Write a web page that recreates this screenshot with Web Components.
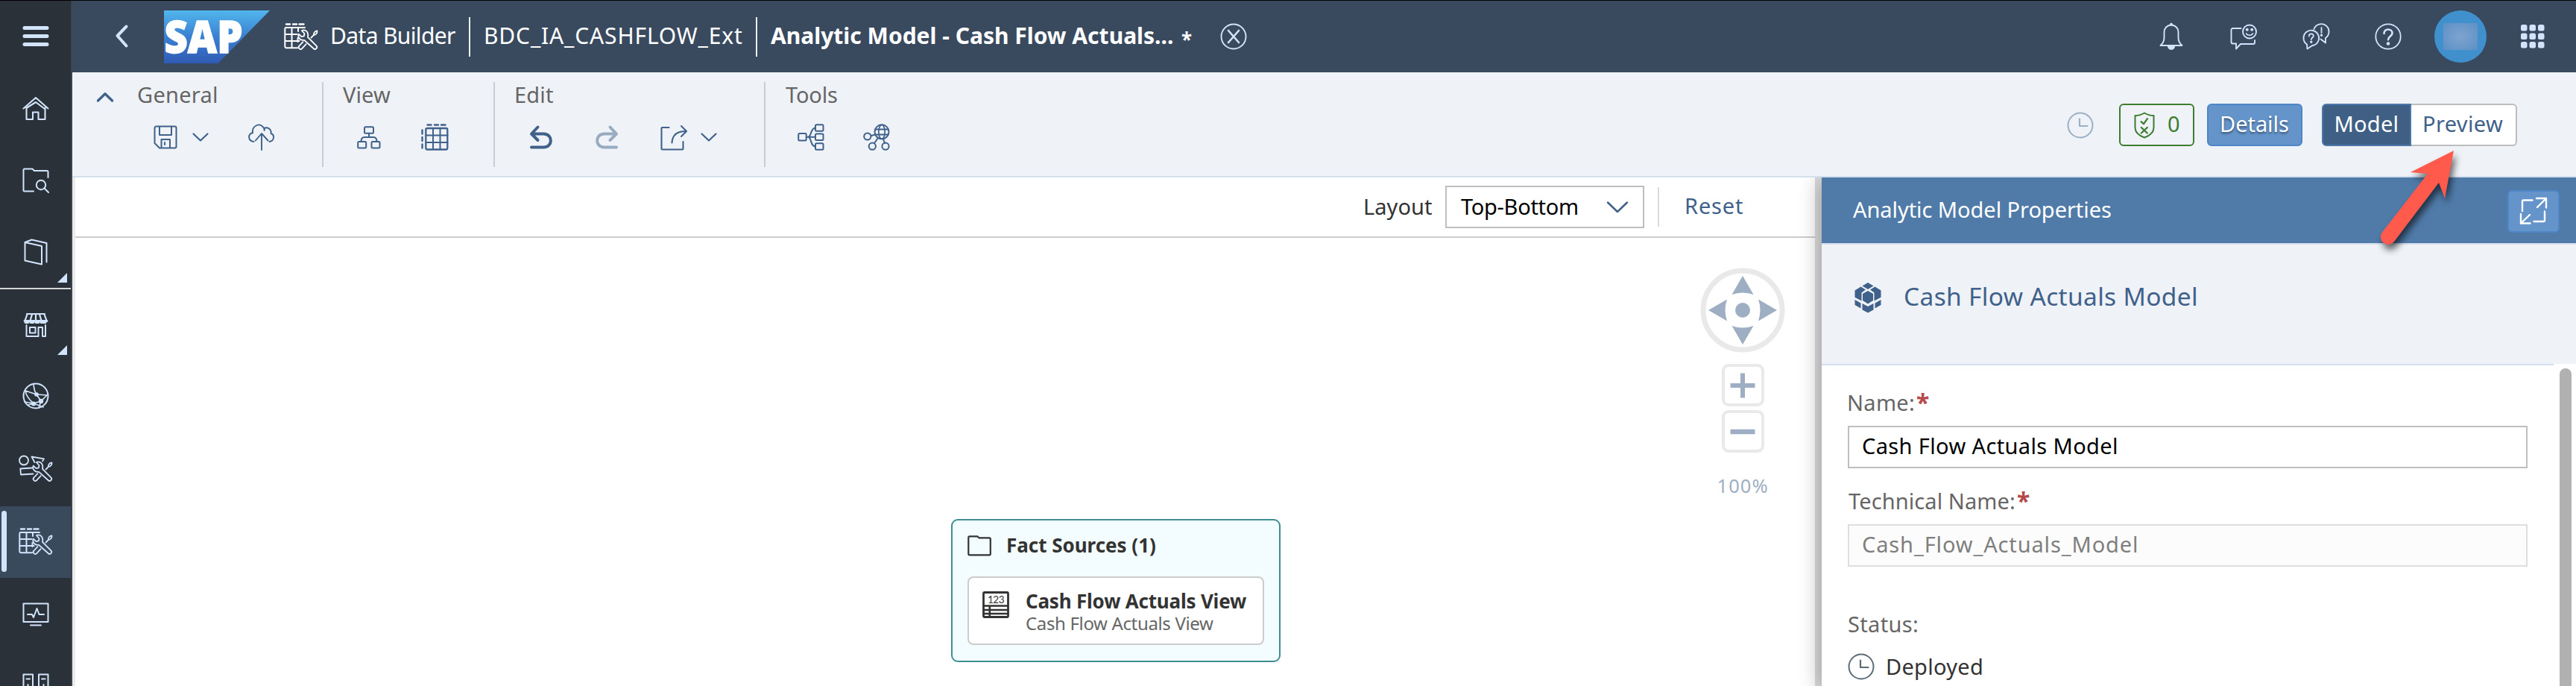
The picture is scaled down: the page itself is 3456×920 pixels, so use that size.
<!DOCTYPE html>
<html lang="en">
<head>
<meta charset="utf-8">
<title>Data Builder</title>
<style>
  html, body { margin: 0; height: 920px; overflow: hidden; background: #fff; }
  body { font-family: "Noto Sans", "Open Sans", sans-serif; font-size: 29px; color: #333; }
</style>
</head>
<body>
<app-shell></app-shell>

<script>
const define = (name, html, setup) => {
  const tpl = document.createElement('template');
  tpl.innerHTML = html;
  customElements.define(name, class extends HTMLElement {
    connectedCallback() {
      if (this.shadowRoot) return;
      this.attachShadow({ mode: 'open' }).append(tpl.content.cloneNode(true));
      if (setup) setup.call(this, this.shadowRoot);
    }
  });
};

/* Icons: [width, height, markup]; strokes use currentColor */
const WRENCH = `
  <path d="M29 10c-1.500-.8-3.500-.8-5.200 0l3.700 4-.6 3.300-3.400.8-3.800-3.500c-1.500 4.200 1.500 9 7.500 8.200L39.600 34a2.600 2.600 0 0 0 3.800-3.700L32 18.800c.8-4-.5-7.300-3-8.800z" stroke-width="1.800"/>
  <path d="M25.500 25.200l-5 5.300a2.500 2.500 0 0 0 3.700 3.700l5.500-6M36.500 19.500l3.500-3.600M40 15.900c-.8-2.300 1.800-5.500 4.500-5.600.4 2.800-2 5.800-4.500 5.600z" stroke-width="1.800"/>`;
const ICONS = {
  menu: [36, 28, `<path d="M3 3.500h30M3 14.500h30M3 25.500h30" stroke-width="5"/>`],
  home: [36, 32, `<path d="M1.500 16.500L18 2l16.500 14.500M5.500 15.500V31h8.500v-9.500h7.500V31h9V15.500M6 15.500L18 8l12 9" stroke-width="2.100"/>`],
  foldersearch: [36, 33, `<path d="M15 31.500H3A1.500 1.500 0 0 1 1.500 30V3A1.500 1.500 0 0 1 3 1.500h10.500l2.500 2.500h17A1.500 1.500 0 0 1 34.500 5.500V13" stroke-width="2"/><circle cx="25" cy="23" r="6.200" stroke-width="2"/><path d="M29.500 27.500l5.500 5.500"/>`],
  book: [32, 36, `<path d="M1.500 5v24.500L24 34.500V10L1.500 5l9-3.500 20 4.500v25.500M24 34.500v-24" stroke-width="2"/>`],
  market: [32, 32, `<path d="M4 1h24M4.500 1.500L1.500 10h29L27.500 1.500M11 1.500L8.500 10M16 1.500V10M21 1.500l2.500 8.500" stroke-width="2.200"/><path d="M1 10.500h30M2 12.500h4M9 12.500h4M16 12.500h4M23 12.500h6" stroke-width="2.800"/><path d="M3.500 16v15h16V19h5.500v12h4V16M8 19h7.500v7.500H8z" stroke-width="2"/>`],
  globenet: [36, 36, `<circle cx="18" cy="18" r="16.500" stroke-width="2"/><path d="M15 2c.5 6 1 10 4 14l6 9M4 11l15 5 15 1M4 11c1 7 5 12 11 17l10-3 9-9M3 26l12 2 13 5M15 28l-7 2M25 25l-3 9" stroke-width="1.700"/><g fill="currentColor" stroke="none"><circle cx="19" cy="16" r="2.800"/><circle cx="25" cy="25" r="3.200"/><circle cx="15" cy="28.500" r="3"/></g>`],
  shapes: [46, 36, `<circle cx="7" cy="7.500" r="6" stroke-width="1.800"/><path d="M21.500 10l-4-7.500 16.500 2.800-2 3.200M19.500 25.500l-16.500 1-.7-8L18.500 17.500" stroke-width="1.800"/><g>${WRENCH}</g>`],
  datatools: [46, 36, `<path d="M3 1.500h5M12 1.500h5M20.500 1.500h6" stroke-width="2.400"/><path d="M28 6H3A1.800 1.800 0 0 0 1.300 7.800V31.500A1.800 1.800 0 0 0 3 33.200h15M10.500 6v27M19 6v5M1.500 15h16M1.500 24h19M18.500 20v5" stroke-width="2"/>${WRENCH}`],
  monitor: [36, 32, `<path d="M1.500 1.500h33v24.500h-33zM11 30.500h14M7 16h6l2 4 4.500-12 3 8H29" stroke-width="2"/>`],
  servers: [36, 36, `<path d="M1.500 1.500h12.500v33H1.500zM22 1.500h12.500v33H22zM5.500 7.500H10M26 7.500h4.500M7.500 15v4M28.500 15v4" stroke-width="2"/>`],
  back: [20, 34, `<path d="M16.500 3.500L4.500 16 16.500 29.500" stroke-width="4"/>`],
  closecircle: [38, 38, `<circle cx="19" cy="19" r="16.500" stroke-width="1.900"/><path d="M12 11l14 16M26 11L12 27" stroke-width="2.600"/>`],
  bell: [32, 36, `<path d="M1.500 30c3.500-3 5-5.500 5-10.500V12a9.500 9.500 0 0 1 19 0v7.500c0 5 1.500 7.500 5 10.500z" stroke-width="1.900"/><path d="M12 31h8a4 4 0 0 1-8 0z" fill="currentColor"/><circle cx="16" cy="1.800" r="1" fill="currentColor"/>`],
  feedback: [36, 36, `<path d="M14.500 7H3.500A2 2 0 0 0 1.500 9v16.500A2 2 0 0 0 3.500 27.500H8V34.500l6-6.500h17a2 2 0 0 0 2-2v-3" stroke-width="1.900"/><circle cx="26" cy="11.500" r="9" stroke-width="1.900"/><path d="M21.500 14c2 3 7 3 9 0" stroke-width="1.600"/><circle cx="22.800" cy="8.800" r="1" fill="currentColor"/><circle cx="29.200" cy="8.800" r="1" fill="currentColor"/>`],
  qa: [37, 36, `<path d="M6 28.500A10.300 10.300 0 1 1 13 30.200L6.500 34.500z" stroke-width="1.900"/><path d="M15.500 8A10.300 10.300 0 1 1 31 20v6.500L24.500 21.500" stroke-width="1.900"/><path d="M8.800 17.500c0-4 6-4 6-.5 0 2.500-3 2.500-3 5M25.500 6v7" stroke-width="1.800"/><circle cx="11.800" cy="25.300" r=".7" fill="currentColor"/><circle cx="25.500" cy="16.200" r=".7" fill="currentColor"/>`],
  help: [36, 36, `<circle cx="18" cy="18" r="16.700" stroke-width="1.800"/><path d="M12.500 14c0-7.500 11-7 11-.5 0 4-5.500 4-5.500 8.800" stroke-width="2.600"/><circle cx="18" cy="27.500" r="1.300" fill="currentColor"/>`],
  grid: [32, 32, `<g fill="currentColor" stroke="none">${[0, 11.5, 23].map(y => [0, 11.5, 23].map(x => `<rect x="${x}" y="${y}" width="8.500" height="8.500" rx="2.500"/>`).join('')).join('')}</g>`],
  up: [24, 15, `<path d="M2.500 12L12 2.800 21.500 12" stroke-width="3.400"/>`],
  save: [32, 32, `<path d="M3.500 1.500h25a2 2 0 0 1 2 2v25a2 2 0 0 1-2 2H8L1.500 24V3.500a2 2 0 0 1 2-2zM8 1.500v11.500h16V1.500M10.500 30V19h11.500v11M15 23v3" stroke-width="2"/>`],
  down: [22, 12, `<path d="M1.500 1.500L11 10.500l9.500-9" stroke-width="2.200"/>`],
  downwide: [30, 16, `<path d="M2 1.500L15 14 28 1.500" stroke-width="2.500"/>`],
  cloudup: [36, 36, `<path d="M7.500 24C-1 23-.5 12.500 6 12.300 4.500 3 15-2 20 4.500 22 6 22 8 21.500 9M21 6.500c4.500-3 10.500.5 9.500 6.500 5.500 2 4.500 10-2 11M18 35V13.500M9.800 22.500L18 13l8.500 9.500" stroke-width="1.900"/>`],
  tree: [32, 31, `<rect x="10" y="1.200" width="12" height="8.600" rx="1.500" stroke-width="2"/><rect x="1.200" y="21" width="11" height="8.500" rx="1.500" stroke-width="2"/><rect x="19.500" y="21" width="11" height="8.500" rx="1.500" stroke-width="2"/><path d="M16 10v5M5.500 21c0-4 1-6 4.500-6h12c3.500 0 4.500 2 4.500 6" stroke-width="2"/>`],
  table: [37, 36, `<path d="M8.500 1.500h5M18 1.500h5M27 1.500h5.500M1.500 8.500v5M1.500 18v5M1.500 27.500v5" stroke-width="2.400"/><rect x="6.300" y="6" width="29" height="28.500" rx="2" stroke-width="2.300"/><path d="M16 6v28M25.500 6v28M6.500 15.500h29M6.500 25h29" stroke-width="2"/>`],
  undo: [32, 32, `<path d="M11.500 2.500L3 11.500l8.500 8.500M3.500 11.500h16c12.500.5 12.500 17.500 0 18H3" stroke-width="4"/>`],
  redo: [32, 32, `<path d="M20.500 2.500L29 11.500l-8.500 8.500M28.500 11.500h-16c-12.500.5-12.500 17.500 0 18H29" stroke-width="4"/>`],
  share: [37, 35, `<path d="M11.500 4H2.500A1 1 0 0 0 1.500 5v27.500a1 1 0 0 0 1 1H29.500a1 1 0 0 0 1-1V23M15.500 24.500C16 14.500 22 9 34 9M28 2l7 7-7 7" stroke-width="2.100"/>`],
  mindmap: [36, 36, `<rect x="1.200" y="13" width="10.500" height="9.500" rx="1.500" stroke-width="2"/><rect x="24" y="1.200" width="10.500" height="8.500" rx="1.500" stroke-width="2"/><rect x="24" y="13.500" width="10.500" height="8.500" rx="1.500" stroke-width="2"/><rect x="24" y="26.200" width="10.500" height="8.500" rx="1.500" stroke-width="2"/><path d="M12 17.800h12M14 17.800c5 0 3-12.300 10-12.300M14 17.800c5 0 3 12.700 10 12.700" stroke-width="2"/>`],
  globelink: [36, 36, `<circle cx="25" cy="10.800" r="9.500" stroke-width="2"/><ellipse cx="25" cy="10.800" rx="4.200" ry="9.500" stroke-width="1.700"/><path d="M16.500 7.500h17M16.500 14.500h17M10.800 16l6-1.800M20 19l-5 7M27 20.500l2 5.500" stroke-width="2"/><circle cx="5.800" cy="17" r="4.600" stroke-width="2"/><circle cx="12.300" cy="30.200" r="4.600" stroke-width="2"/><circle cx="30" cy="30.200" r="4.600" stroke-width="2"/>`],
  clock: [36, 36, `<circle cx="18" cy="18" r="16.500" stroke-width="2"/><path d="M17 9.500V19h10.500" stroke-width="2.200"/>`],
  shield: [28, 36, `<path d="M14 1.500c4 2.500 8 3.500 12.500 3.500v16c0 7-5.500 11-12.500 13.500C7 32 1.500 28 1.500 21V5C6 5 10 4 14 1.500z" stroke-width="2"/><path d="M9.500 13.200l3.500 3 5-7M9.800 21l8 7.500M17.800 21l-8 7.500" stroke-width="2.300"/>`],
  expand: [38, 38, `<path d="M17.500 4.500h-12a1.500 1.500 0 0 0-1.500 1.500v13M34 19.500v12a1.500 1.500 0 0 1-1.500 1.500H19.500M23 2h13v12.500M35 3L24 14M2 23v12.500h12.500M3 34.500L14 24" stroke-width="2.400"/>`],
  cube: [38, 42, `<g fill="currentColor" stroke="none"><path d="M19 1l7.500 4.500L19 10l-7.500-4.500z"/><path d="M9.500 6.500l6.500 4-5.500 4v11L1.500 20.800V11.500z"/><path d="M28.500 6.500l-6.500 4 5.500 4v11l9-4.700V11.500z"/><path d="M19 12l7 4v9l-7 4.500-7-4.500v-9z"/><path d="M1.500 24l8 4.500v7l-8-4.500zM36.500 24l-8 4.500v7l8-4.500z"/><path d="M11.500 29l7.500 4 7.500-4v8.500L19 41.500l-7.500-4z"/></g>`],
  folder: [32, 28, `<path d="M2.800 1.300h10.500l2 2h14a1.500 1.500 0 0 1 1.500 1.500v20a1.500 1.500 0 0 1-1.500 1.500H2.800a1.500 1.500 0 0 1-1.500-1.500V2.800a1.500 1.500 0 0 1 1.500-1.500z" stroke-width="2.200"/>`],
  fact: [36, 36, `<rect x="1.500" y="1.500" width="33" height="33" rx="1.500" stroke-width="2.800"/><path d="M2 19.500h32M2 25h32M2 30h32M9.800 19.500v15" stroke-width="2.600"/><text x="7" y="15.500" font-size="13.500" textLength="22.500" fill="currentColor" stroke="none" font-family="Lato">123</text>`]
};

define('ui-icon', `<style>:host{display:block;flex:none;line-height:0}svg{display:block;overflow:visible}</style><div></div>`, function (root) {
  const [w, h, body] = ICONS[this.getAttribute('name')];
  root.querySelector('div').innerHTML =
    `<svg width="${w}" height="${h}" viewBox="0 0 ${w} ${h}" fill="none" stroke="currentColor" stroke-width="2" stroke-linecap="round" stroke-linejoin="round">${body}</svg>`;
});

/* One-line label whose tracking is set so that its glyphs span the given width */
const ctx = document.createElement('canvas').getContext('2d');
define('ui-text', `<style>:host{display:block;flex:none;white-space:pre;line-height:40px}span{display:block}</style><span><slot></slot></span>`, function (root) {
  const width = +this.getAttribute('w'), size = +(this.getAttribute('size') || 29);
  const weight = this.getAttribute('weight') || 400, text = this.textContent;
  ctx.font = `${weight} ${size}px "Noto Sans"`;
  const m = ctx.measureText(text), span = root.querySelector('span');
  const ink = m.actualBoundingBoxLeft + m.actualBoundingBoxRight;
  const gap = text.length > 1 ? (width - ink) / (text.length - 1) : 0;
  this.style.cssText += `;width:${width}px;font-size:${size}px;font-weight:${weight}`;
  span.style.cssText = `letter-spacing:${gap.toFixed(3)}px;margin-left:${m.actualBoundingBoxLeft.toFixed(2)}px`;
});

define('sap-logo', `
<style>:host{display:block;flex:none;width:143px;height:71px}svg{display:block;overflow:visible}</style>
<svg width="143" height="71" viewBox="0 0 143 71">
  <defs><linearGradient id="g" x1="0" y1="0" x2="0" y2="1"><stop offset="0" stop-color="#52b6ec"/><stop offset=".5" stop-color="#3a80d0"/><stop offset="1" stop-color="#305bb5"/></linearGradient></defs>
  <path d="M0 0h142L72.500 71H0z" fill="url(#g)"/>
  <text x="0.500" y="57" font-family="Open Sans, Noto Sans" font-weight="800" font-size="61" textLength="105" lengthAdjust="spacingAndGlyphs" fill="#fff" stroke="#fff" stroke-width="1.500">SAP</text>
</svg>`);

define('nav-item', `
<style>
  :host{display:flex;flex:none;height:96px;align-items:center;justify-content:center;position:relative;color:#d1e4fb}
  :host([active]){background:#394a5c}
  :host([active])::before{content:"";position:absolute;left:2px;top:6px;width:7px;height:82px;border-radius:4px;background:#d1e4fb}
  :host([more])::after{content:"";position:absolute;right:5px;bottom:7px;border-style:solid;border-width:0 0 13px 13px;border-color:transparent transparent #d1e4fb}
</style><slot></slot>`);

define('side-nav', `
<style>
  :host{display:flex;flex-direction:column;flex:none;width:95px;height:919px;overflow:hidden;background:#2b3138;border-right:2px solid #3c434d}
  hr{margin:0;border:0;height:2px;flex:none;background:#d4d7d6}
</style>
<nav-item style="height:93px"><ui-icon name="menu"></ui-icon></nav-item>
<nav-item style="margin-top:3px"><ui-icon name="home"></ui-icon></nav-item>
<nav-item><ui-icon name="foldersearch"></ui-icon></nav-item>
<nav-item more style="height:97px"><ui-icon name="book"></ui-icon></nav-item>
<hr>
<nav-item more style="height:95px"><ui-icon name="market"></ui-icon></nav-item>
<nav-item><ui-icon name="globenet"></ui-icon></nav-item>
<nav-item style="height:100px"><ui-icon name="shapes" style="padding-bottom:2px"></ui-icon></nav-item>
<nav-item active><ui-icon name="datatools" style="padding-bottom:3px"></ui-icon></nav-item>
<nav-item style="height:97px"><ui-icon name="monitor"></ui-icon></nav-item>
<nav-item style="height:98px"><ui-icon name="servers"></ui-icon></nav-item>`);

define('shell-bar', `
<style>
  :host{display:flex;align-items:center;height:96px;background:#394a5f;color:#fff;padding-left:56px;box-sizing:border-box}
  .tint{color:#d1e4fb}
  .line{width:2px;height:53px;background:#eef1f4;flex:none}
  .space{flex:1}
  .avatar{width:70px;height:70px;border-radius:50%;background:#3f90cd;display:grid;place-items:center;flex:none}
  .avatar i{width:46px;height:36px;background:radial-gradient(#7da4d0,#5d90c6)}
  .tools{display:flex;align-items:center;flex:none}
  ui-text{margin-bottom:3px}
</style>
<ui-icon class="tint" name="back"></ui-icon>
<sap-logo style="margin-left:47px"></sap-logo>
<ui-icon name="datatools" style="margin-left:18px"></ui-icon>
<ui-text w="166" size="30" style="margin-left:18px">Data Builder</ui-text>
<div class="line" style="margin-left:18px"></div>
<ui-text w="345" size="30" style="margin-left:20px">BDC_IA_CASHFLOW_Ext</ui-text>
<div class="line" style="margin-left:18px"></div>
<ui-text w="539" size="30" weight="700" style="margin-left:18px">Analytic Model - Cash Flow Actuals...</ui-text>
<ui-text w="12" size="26" weight="700" style="margin:7px 0 0 12px">*</ui-text>
<ui-icon class="tint" name="closecircle" style="margin-left:39px"></ui-icon>
<div class="space"></div>
<div class="tools tint">
  <ui-icon name="bell"></ui-icon>
  <ui-icon name="feedback" style="margin-left:63px"></ui-icon>
  <ui-icon name="qa" style="margin-left:61px"></ui-icon>
  <ui-icon name="help" style="margin-left:60px"></ui-icon>
  <div class="avatar" style="margin-left:44px"><i></i></div>
  <ui-icon name="grid" style="margin:0 42px 0 46px"></ui-icon>
</div>`);

define('tool-group', `
<style>
  :host{display:flex;flex-direction:column;flex:none;height:114px;margin-top:13px;box-sizing:border-box;border-right:2px solid #c9ced4}
  .label{height:40px;margin-top:-3px;color:#666}
  .row{display:flex;align-items:center;height:40px;margin-top:17px;color:#3f618a}
  :host([last]){border:0}
</style>
<div class="label"><slot name="label"></slot></div>
<div class="row"><slot></slot></div>`);

define('tool-bar', `
<style>
  :host{display:flex;align-items:flex-start;height:141px;box-sizing:border-box;background:#eff3f8;border-bottom:2px solid #d3dfed;color:#3f618a}
  .fold{margin:26px 0 0 32px;flex:none}
  .space{flex:1}
  .right{display:flex;align-items:center;margin:42px 79px 0 0;height:57px}
  .btn{box-sizing:border-box;height:57px;border:2px solid;border-radius:6px;display:flex;align-items:center;justify-content:center;flex:none}
  .valid{width:101px;border-color:#3d7d2f;color:#3d7d2f;gap:18px}
  .details{width:128px;margin-left:17px;background:#6494ca;border-color:#4f86c6;color:#fff;text-shadow:0 2px 3px #0007}
  .model{width:120px;margin-left:26px;background:#3f5f85;border-color:#4c77ab;color:#fff;border-radius:6px 0 0 6px}
  .preview{width:142px;background:#fff;border-color:#bcbdbf;border-left:0;border-radius:0 6px 6px 0;color:#3f618a}
  .btn ui-text{margin-bottom:3px}
</style>
<ui-icon class="fold" name="up"></ui-icon>
<tool-group style="width:281px">
  <ui-text slot="label" w="106" style="margin-left:32px">General</ui-text>
  <ui-icon name="save" style="margin-left:53px"></ui-icon>
  <ui-icon name="down" style="margin-left:20px"></ui-icon>
  <ui-icon name="cloudup" style="margin-left:53px"></ui-icon>
</tool-group>
<tool-group style="width:230px">
  <ui-text slot="label" w="64" style="margin-left:26px">View</ui-text>
  <ui-icon name="tree" style="margin-left:45px"></ui-icon>
  <ui-icon name="table" style="margin-left:54px"></ui-icon>
</tool-group>
<tool-group style="width:363px">
  <ui-text slot="label" w="50" style="margin-left:28px">Edit</ui-text>
  <ui-icon name="undo" style="margin-left:46px"></ui-icon>
  <ui-icon name="redo" style="margin-left:56px;color:#98abc1"></ui-icon>
  <ui-icon name="share" style="margin-left:56px"></ui-icon>
  <ui-icon name="down" style="margin-left:17px"></ui-icon>
</tool-group>
<tool-group last>
  <ui-text slot="label" w="69" style="margin-left:27px">Tools</ui-text>
  <ui-icon name="mindmap" style="margin-left:43px"></ui-icon>
  <ui-icon name="globelink" style="margin-left:52px"></ui-icon>
</tool-group>
<div class="space"></div>
<div class="right">
  <ui-icon name="clock" style="margin-right:34px;color:#9bafc5"></ui-icon>
  <div class="btn valid"><ui-icon name="shield"></ui-icon><ui-text w="15">0</ui-text></div>
  <div class="btn details"><ui-text w="90">Details</ui-text></div>
  <div class="btn model"><ui-text w="83">Model</ui-text></div>
  <div class="btn preview"><ui-text w="106">Preview</ui-text></div>
</div>`);

define('canvas-nav', `
<style>
  :host{display:flex;flex-direction:column;align-items:center;width:114px;color:#9fafc3}
  svg{display:block}
  .box{box-sizing:border-box;width:57px;height:57px;border:4px solid #e9e9e9;border-radius:9px;display:grid;place-items:center}
</style>
<svg width="114" height="114" viewBox="-57 -57 114 114">
  <circle r="53" fill="#fff" stroke="#e9e9e9" stroke-width="7"/><circle r="10" fill="#9fafc3"/>
  <g fill="#9fafc3"><path d="M0-46L14.500-21Q0-26-14.500-21z"/><path d="M0-46L14.500-21Q0-26-14.500-21z" transform="rotate(90)"/><path d="M0-46L14.500-21Q0-26-14.500-21z" transform="rotate(180)"/><path d="M0-46L14.500-21Q0-26-14.500-21z" transform="rotate(270)"/></g>
</svg>
<div class="box" style="margin-top:15px"><svg width="34" height="34"><path d="M0.500 17h33M17 .5v33" stroke="#9fafc3" stroke-width="6"/></svg></div>
<div class="box" style="margin-top:5px"><svg width="34" height="34"><path d="M0.500 17h33" stroke="#9fafc3" stroke-width="6.500"/></svg></div>
<ui-text w="65" size="25.5" style="margin-top:24px">100%</ui-text>`);

define('source-node', `
<style>
  :host{display:block;box-sizing:border-box;width:442px;height:192px;border:2px solid #3f8f91;border-radius:9px;background:#f3fcfe;padding:14px 20px 0}
  .head{display:flex;align-items:center;height:40px}
  .card{box-sizing:border-box;height:92px;margin-top:21px;display:flex;width:398px;background:#fff;border:2px solid #ccc;border-radius:8px;padding:18px 0 0 18px}
  .texts{margin-left:23px}
</style>
<div class="head"><ui-icon name="folder"></ui-icon><ui-text w="198" size="26" weight="700" style="margin:-2px 0 0 22px">Fact Sources (1)</ui-text></div>
<div class="card">
  <ui-icon name="fact"></ui-icon>
  <div class="texts">
    <ui-text w="295" size="26" weight="700" style="line-height:30px;margin-top:-2px">Cash Flow Actuals View</ui-text>
    <ui-text w="251" size="24" style="line-height:30px;color:#666">Cash Flow Actuals View</ui-text>
  </div>
</div>`);

define('model-canvas', `
<style>
  :host{display:flex;flex-direction:column;flex:1;position:relative;border-left:4px solid #ebebeb;background:#fff;overflow:hidden}
  .bar{display:flex;align-items:center;justify-content:flex-end;height:79px;flex:none;border-bottom:2px solid #ccc;padding-right:97px}
  .select{box-sizing:border-box;width:267px;height:57px;border:2px solid #bfbfbf;display:flex;align-items:center;margin-left:18px;color:#000;padding-left:19px}
  .line{width:2px;height:53px;background:#d9dbde;margin-left:18px}
  canvas-nav{position:absolute;left:2180px;top:121px}
  source-node{position:absolute;left:1175px;top:458px}
  ui-text{margin-top:-1px}
</style>
<div class="bar">
  <ui-text w="90">Layout</ui-text>
  <div class="select"><ui-text w="156">Top-Bottom</ui-text><ui-icon name="downwide" style="margin-left:39px;color:#3f618a"></ui-icon></div>
  <div class="line"></div>
  <ui-text w="76" style="margin:-3px 0 0 36px;color:#3f618a">Reset</ui-text>
</div>
<canvas-nav></canvas-nav>
<source-node></source-node>`);

define('form-field', `
<style>
  :host{display:block}
  .label{display:flex;color:#666;height:40px}
  .label b{color:#b5484a;margin-left:4px}
  .box{box-sizing:border-box;height:57px;margin-top:11px;border:2px solid #bfbfbf;background:#fff;color:#000;padding:5px 0 0 18px}
  :host([readonly]) .box{border-color:#dedede;background:#fcfcfc;color:#7f7f7f}
</style>
<div class="label"><slot name="label"></slot><b><ui-text w="15" size="32" weight="700">*</ui-text></b></div>
<div class="box"><slot></slot></div>`);

define('properties-panel', `
<style>
  :host{display:flex;flex-direction:column;flex:none;width:1012px;height:682px;background:#fff;position:relative;box-shadow:0 4px 26px 2px #0005}
  header{box-sizing:border-box;height:90px;flex:none;display:flex;align-items:center;background:#507ba9;border-bottom:2px solid #d3dfed;color:#fff;padding:0 22px 0 42px;justify-content:space-between}
  header ui-text{margin-top:-2px}
  .btn{box-sizing:border-box;width:70px;height:57px;border:2px solid #4f86c6;border-radius:6px;background:#6494ca;display:grid;place-items:center;margin-top:2px}
  .title{box-sizing:border-box;height:162px;flex:none;display:flex;align-items:flex-start;background:#eff3f8;color:#3f618a;padding:50px 0 0 43px}
  .rule{height:2px;width:982px;background:#d3dfed;margin-top:-2px;flex:none}
  .edge{width:30px;height:2px;margin:-2px 0 0 982px;background:#fff;flex:none}
  .body{display:flex;flex:1;min-height:0}
  .form{flex:1;padding:30px 33px 0 35px;overflow:hidden}
  .thumb{width:16px;margin:4px 6px 0 10px;border-radius:8px 8px 0 0;background:#b1b1b1}
  .state{display:flex;align-items:center;color:#333;margin-top:17px;height:40px}
</style>
<header><ui-text w="346">Analytic Model Properties</ui-text><div class="btn"><ui-icon name="expand"></ui-icon></div></header>
<div class="title"><ui-icon name="cube"></ui-icon><ui-text w="390" size="33.5" style="margin:-1px 0 0 31px">Cash Flow Actuals Model</ui-text></div>
<div class="rule"></div><div class="edge"></div>
<div class="body">
  <div class="form">
    <form-field><ui-text slot="label" w="87" style="margin-left:1px">Name:</ui-text><ui-text w="341">Cash Flow Actuals Model</ui-text></form-field>
    <form-field readonly style="margin-top:24px"><ui-text slot="label" w="222" style="margin-left:1px">Technical Name:</ui-text><ui-text w="368">Cash_Flow_Actuals_Model</ui-text></form-field>
    <ui-text w="92" style="margin:57px 0 0 1px;color:#666">Status:</ui-text>
    <div class="state"><ui-icon name="clock" style="color:#5d6b74"></ui-icon><ui-text w="127" style="margin-left:17px">Deployed</ui-text></div>
  </div>
  <div class="thumb"></div>
</div>`);

define('app-shell', `
<style>
  :host{display:flex;box-sizing:border-box;width:3456px;height:920px;border-top:1px solid #000;position:relative;overflow:hidden}
  main{flex:1;display:flex;flex-direction:column;min-width:0}
  .work{flex:1;display:flex;min-height:0;overflow:hidden}
  .gutter{width:5px;flex:none;background:#e0e0e0;border-left:4px solid #dedede}
  .arrow{position:absolute;left:3180px;top:190px;pointer-events:none;overflow:visible;filter:drop-shadow(3px 7px 5px #0009)}
</style>
<side-nav></side-nav>
<main>
  <shell-bar></shell-bar>
  <tool-bar></tool-bar>
  <div class="work"><model-canvas></model-canvas><div class="gutter"></div><properties-panel></properties-panel></div>
</main>
<svg class="arrow" width="130" height="150" viewBox="3180 191 130 150">
  <path d="M3292 202L3234 231l23 2L3196 311.500A10 10 0 0 0 3212 324L3272 245l8 21z" fill="#ff5a4c"/>
</svg>`);
</script>
</body>
</html>
